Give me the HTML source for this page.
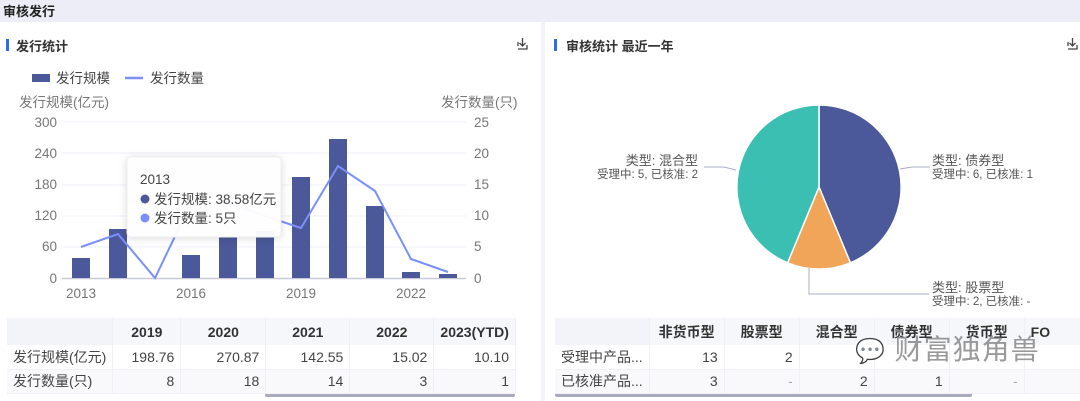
<!DOCTYPE html>
<html><head><meta charset="utf-8"><style>
*{margin:0;padding:0;box-sizing:border-box}
body{width:1080px;height:401px;overflow:hidden;background:#fff;font-family:"Liberation Sans","Noto Sans CJK SC",sans-serif;position:relative;color:#333}
.hdr{position:absolute;left:0;top:0;width:1080px;height:22px;background:#ededf7;font-size:13px;font-weight:bold;padding:1px 3px;color:#222}
.div{position:absolute;left:541px;top:22px;width:4px;height:379px;background:#f3f3f8}
.t{position:absolute;font-size:13px;font-weight:bold;color:#333}
.bar{position:absolute;width:3px;height:12px;background:#2f6bea}
table{position:absolute;border-collapse:collapse;font-size:14px;color:#444}
td{height:24px;padding:0 6px;border-right:1px solid #eef0f8;text-align:right;white-space:nowrap}
tr.h td{height:27px;background:#f6f7fb;font-weight:bold;text-align:center;color:#333}
tr.r td{background:#fff;border-bottom:1px solid #f0f0f5}
tr.r2 td{background:#f9f9fc}
td.l{text-align:left;background:#f7f7fb}
</style></head><body>
<div class="hdr">审核发行</div>
<div class="div"></div>
<div class="bar" style="left:6px;top:39px"></div><div class="t" style="left:16px;top:36px">发行统计</div>
<div class="bar" style="left:554px;top:39px"></div><div class="t" style="left:566px;top:36px">审核统计 最近一年</div>
<svg style="position:absolute;left:0;top:0" width="1080" height="401">
<g stroke="#444" stroke-width="1.3" fill="none">
<path d="M518 46v-4M518 49h9v-4M522.5 38v8M519.5 43l3 3 3-3"/>
<path d="M1068 46v-4M1068 49h9v-4M1072.5 38v8M1069.5 43l3 3 3-3"/>
</g>
<rect x="32" y="74" width="18" height="8" fill="#4b5899"/>
<text x="56" y="83" font-size="13.5" fill="#444">发行规模</text>
<line x1="125" y1="78" x2="143" y2="78" stroke="#7b8ffb" stroke-width="2.5"/>
<text x="150" y="83" font-size="13.5" fill="#444">发行数量</text>
<g font-size="13.5" fill="#777">
<text x="19" y="107">发行规模(亿元)</text>
<text x="441" y="107">发行数量(只)</text>
<g text-anchor="end"><text x="57" y="127">300</text><text x="57" y="158">240</text><text x="57" y="189">180</text><text x="57" y="220">120</text><text x="57" y="251">60</text><text x="57" y="283">0</text></g>
<text x="474" y="127">25</text><text x="474" y="158">20</text><text x="474" y="189">15</text><text x="474" y="220">10</text><text x="474" y="251">5</text><text x="474" y="283">0</text>
<g text-anchor="middle"><text x="81" y="298">2013</text><text x="191" y="298">2016</text><text x="301" y="298">2019</text><text x="411" y="298">2022</text></g>
</g>
<g stroke="#eef0fa" stroke-width="1"><line x1="62" y1="122" x2="466" y2="122"/><line x1="62" y1="153" x2="466" y2="153"/><line x1="62" y1="185" x2="466" y2="185"/><line x1="62" y1="216" x2="466" y2="216"/><line x1="62" y1="247" x2="466" y2="247"/></g>
<line x1="62" y1="278.5" x2="466" y2="278.5" stroke="#c8cad8" stroke-width="1.5"/>
<g fill="#4b5899">
<rect x="72" y="258" width="18" height="20"/><rect x="109" y="229" width="18" height="49"/>
<rect x="182" y="255" width="18" height="23"/><rect x="219" y="237" width="18" height="41"/><rect x="256" y="231" width="18" height="47"/>
<rect x="292" y="177" width="18" height="101"/><rect x="329" y="139" width="18" height="139"/><rect x="366" y="206" width="18" height="72"/>
<rect x="402" y="272" width="18" height="6"/><rect x="439" y="274" width="18" height="4"/>
</g>
<polyline fill="none" stroke="#7b8ffb" stroke-width="2" points="81,247 118,234 155,278 191,203 228,203 265,216 301,228 338,166 375,191 411,259 448,272"/>
<rect x="127" y="157" width="154" height="80" rx="4" fill="#fff" fill-opacity="0.96" stroke="#eee" style="filter:drop-shadow(0 1px 4px rgba(0,0,0,.15))"/>
<text x="140" y="184" font-size="13.5" fill="#444">2013</text>
<circle cx="145" cy="199" r="4.5" fill="#4b5899"/><text x="154" y="204" font-size="13.5" fill="#444">发行规模: 38.58亿元</text>
<circle cx="145" cy="218" r="4.5" fill="#7b8ffb"/><text x="154" y="223" font-size="13.5" fill="#444">发行数量: 5只</text>
<g stroke="#fff" stroke-width="1.5">
<path d="M819 187L819 105A82 82 0 0 1 850.4 262.8Z" fill="#4b5899"/>
<path d="M819 187L850.4 262.8A82 82 0 0 1 787.6 262.8Z" fill="#f1a558"/>
<path d="M819 187L787.6 262.8A82 82 0 0 1 819 105Z" fill="#3bbfb2"/>
</g>
<g stroke="#a8acc4" fill="none"><path d="M704 167h20l12 3"/><path d="M900 169l12-2h18"/><path d="M809 268v26h120"/></g>
<g font-size="13" fill="#555">
<text x="698" y="165" text-anchor="end">类型: 混合型</text><text x="698" y="178" font-size="11.5" text-anchor="end">受理中: 5, 已核准: 2</text>
<text x="932" y="165">类型: 债券型</text><text x="932" y="178" font-size="11.5">受理中: 6, 已核准: 1</text>
<text x="932" y="292">类型: 股票型</text><text x="932" y="305" font-size="11.5">受理中: 2, 已核准: -</text>
</g>
<rect x="265" y="393" width="250" height="4" rx="2" fill="#a9abbd"/>
<rect x="555" y="393" width="417" height="4" rx="2" fill="#a9abbd"/>
</svg>
<table style="left:7px;top:318px;width:509px">
<tr class="h"><td style="width:103px;background:#f3f4f9"></td><td style="width:68px">2019</td><td style="width:85px">2020</td><td style="width:84px">2021</td><td style="width:84px">2022</td><td>2023(YTD)</td></tr>
<tr class="r"><td class="l">发行规模(亿元)</td><td>198.76</td><td>270.87</td><td>142.55</td><td>15.02</td><td>10.10</td></tr>
<tr class="r r2"><td class="l">发行数量(只)</td><td>8</td><td>18</td><td>14</td><td>3</td><td>1</td></tr>
</table>
<table style="left:555px;top:318px;width:540px">
<tr class="h"><td style="width:93px;background:#f3f4f9"></td><td style="width:75px">非货币型</td><td style="width:75px">股票型</td><td style="width:75px">混合型</td><td style="width:75px">债券型</td><td style="width:75px">货币型</td><td style="text-align:left">FO</td></tr>
<tr class="r"><td class="l">受理中产品...</td><td>13</td><td>2</td><td></td><td></td><td></td><td></td></tr>
<tr class="r r2"><td class="l">已核准产品...</td><td>3</td><td style="color:#aaa">-</td><td>2</td><td>1</td><td style="color:#aaa">-</td><td></td></tr>
</table>
<div style="position:absolute;left:855px;top:328px;font-size:28px;color:rgba(120,120,120,.75);letter-spacing:1px"><span style="font-size:24px">💬</span> 财富独角兽</div>
</body></html>
